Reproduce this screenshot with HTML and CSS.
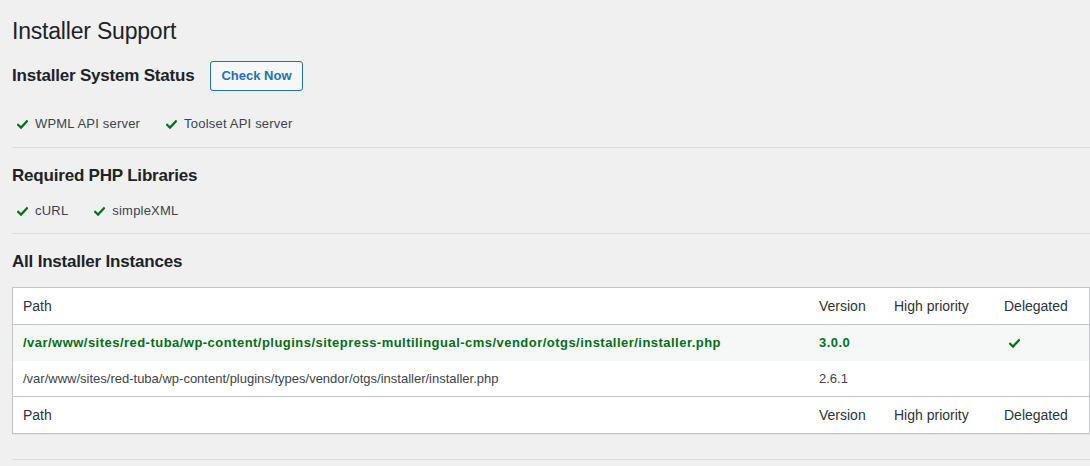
FILE: index.html
```html
<!DOCTYPE html>
<html>
<head>
<meta charset="utf-8">
<link rel="stylesheet" href="styles.css">
</head>
<body>
<div class="wrap">
  <h1 class="title">Installer Support</h1>

  <div class="status-head">
    <h2 class="section-title">Installer System Status</h2>
    <button class="button">Check Now</button>
  </div>
  <ul class="checks checks-first">
    <li><svg class="tick" viewBox="0 0 12 12"><path d="M1.2 6.4 L4.4 9.4 L10.8 2.4"/></svg>WPML API server</li>
    <li><svg class="tick" viewBox="0 0 12 12"><path d="M1.2 6.4 L4.4 9.4 L10.8 2.4"/></svg>Toolset API server</li>
  </ul>
  <hr class="sep sep-1">

  <h2 class="section-title sec">Required PHP Libraries</h2>
  <ul class="checks checks-second">
    <li><svg class="tick" viewBox="0 0 12 12"><path d="M1.2 6.4 L4.4 9.4 L10.8 2.4"/></svg>cURL</li>
    <li><svg class="tick" viewBox="0 0 12 12"><path d="M1.2 6.4 L4.4 9.4 L10.8 2.4"/></svg>simpleXML</li>
  </ul>
  <hr class="sep sep-2">

  <h2 class="section-title sec">All Installer Instances</h2>
  <table class="instances">
    <thead>
      <tr><th class="c-path">Path</th><th class="c-ver">Version</th><th class="c-prio">High priority</th><th class="c-del">Delegated</th></tr>
    </thead>
    <tbody>
      <tr class="active">
        <td>/var/www/sites/red-tuba/wp-content/plugins/sitepress-multilingual-cms/vendor/otgs/installer/installer.php</td>
        <td>3.0.0</td>
        <td></td>
        <td class="del-cell"><svg class="tick tick-table" viewBox="0 0 12 12"><path d="M1.2 6.4 L4.4 9.4 L10.8 2.4"/></svg></td>
      </tr>
      <tr class="plain">
        <td>/var/www/sites/red-tuba/wp-content/plugins/types/vendor/otgs/installer/installer.php</td>
        <td>2.6.1</td>
        <td></td>
        <td></td>
      </tr>
    </tbody>
    <tfoot>
      <tr><th class="c-path">Path</th><th class="c-ver">Version</th><th class="c-prio">High priority</th><th class="c-del">Delegated</th></tr>
    </tfoot>
  </table>
  <hr class="sep sep-3">
</div>
</body>
</html>
```

FILE: styles.css
```css
html, body {
  margin: 0;
  padding: 0;
  background: #f0f0f1;
  font-family: "Liberation Sans", Arial, sans-serif;
  color: #3c434a;
  font-size: 13px;
}

.wrap {
  padding-left: 12px;
  width: 1078px;
}

.title {
  margin: 0;
  padding-top: 17px;
  font-size: 23px;
  line-height: 29px;
  font-weight: 400;
  color: #1d2327;
  letter-spacing: -0.2px;
}

.status-head {
  display: flex;
  align-items: center;
  gap: 16px;
  margin-top: 15px;
  height: 30px;
}

.section-title {
  margin: 0;
  font-size: 17px;
  line-height: 20px;
  font-weight: 700;
  color: #1d2327;
  letter-spacing: -0.2px;
}

.sec {
  margin-top: 18px;
}

.button {
  font-family: inherit;
  font-size: 13px;
  line-height: 28px;
  height: 30px;
  padding: 0 10px;
  border: 1px solid #2271b1;
  border-radius: 3px;
  background: #f6f7f7;
  color: #2271b1;
  font-weight: 600;
  cursor: pointer;
}

.checks {
  list-style: none;
  margin: 0;
  padding: 0 0 0 5px;
  display: flex;
  gap: 26px;
  line-height: 20px;
}

.checks li {
  display: flex;
  align-items: center;
  gap: 7px;
  letter-spacing: 0.2px;
}

.checks-first {
  margin-top: 23px;
}

.checks-second {
  margin-top: 15px;
}

.tick {
  width: 11px;
  height: 11px;
  fill: none;
  stroke: #007017;
  stroke-width: 2.4;
  stroke-linecap: square;
  stroke-linejoin: miter;
}

.sep {
  border: 0;
  border-top: 1px solid #dcdcde;
  margin: 0;
  height: 0;
}

.sep-1 { margin-top: 13px; }
.sep-2 { margin-top: 12px; }
.sep-3 { margin-top: 25px; }

.instances {
  margin-top: 15px;
  width: 1078px;
  border-collapse: separate;
  border-spacing: 0;
  background: #fff;
  border: 1px solid #c3c4c7;
  box-shadow: 0 1px 1px rgba(0,0,0,0.04);
  table-layout: fixed;
}

.instances th,
.instances td {
  text-align: left;
  padding: 0 10px;
  font-size: 13px;
  white-space: nowrap;
  vertical-align: middle;
}

.instances th {
  font-weight: 400;
  color: #2c3338;
  font-size: 14px;
  line-height: 36px;
}

.instances thead th {
  border-bottom: 1px solid #c3c4c7;
}

.instances tfoot th {
  border-top: 1px solid #c3c4c7;
}

.c-path { width: auto; }
.c-ver { width: 55px; }
.c-prio { width: 90px; }
.c-del { width: 75px; }

.instances tr.active td {
  background: #f6f7f7;
  color: #007017;
  font-weight: 700;
  line-height: 36px;
  letter-spacing: 0.47px;
}

.instances tr.plain td {
  line-height: 35px;
  color: #3c434a;
}

.del-cell {
  padding-left: 15px !important;
}

.tick-table {
  display: block;
}
```
